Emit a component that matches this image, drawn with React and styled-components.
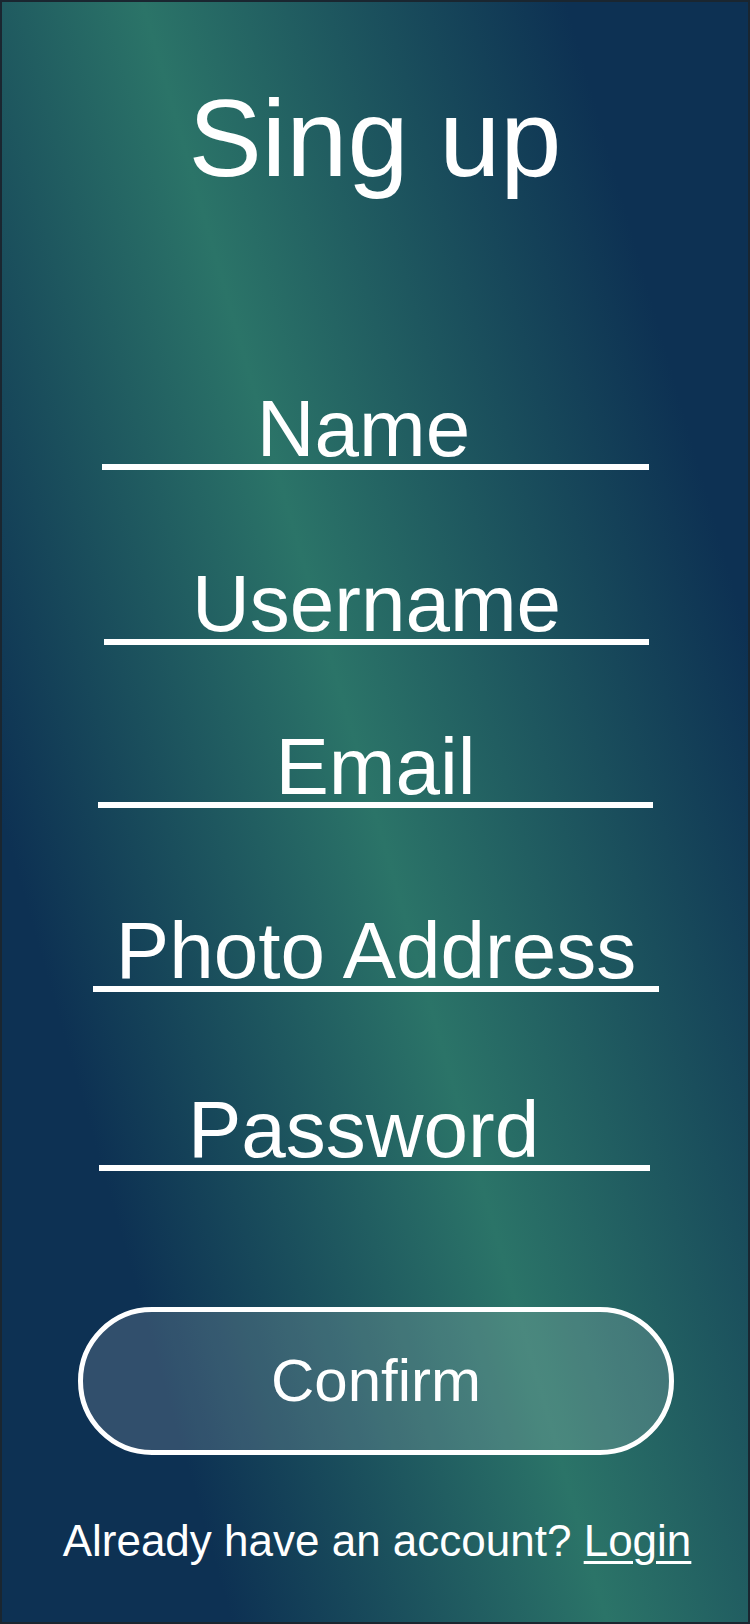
import React from "react"
import styled, { createGlobalStyle } from "styled-components"

const GlobalStyle = createGlobalStyle`
  html, body {
    margin: 0;
    padding: 0;
  }
  body {
    font-family: "Liberation Sans", Arial, sans-serif;
    background: #0d3153;
  }
`

const Screen = styled.main`
  box-sizing: border-box;
  width: 750px;
  min-height: 1624px;
  border: 2px solid #1a2630;
  background: linear-gradient(
    74deg,
    #0d3153 0%,
    #0d3153 19%,
    #2b7468 50%,
    #0d3153 85%,
    #0d3153 100%
  );
  color: #fff;
  display: flex;
  flex-direction: column;
  align-items: center;
  padding-top: 81px;
`

const Title = styled.h1`
  margin: 0;
  font-size: 110px;
  font-weight: 400;
  line-height: 110px;
  text-align: center;
`

const Form = styled.form`
  width: 100%;
  display: flex;
  flex-direction: column;
  margin-top: 201px;
`

const Field = styled.label`
  display: block;
  box-sizing: border-box;
  margin: ${p => p.$gap}px 0 0 ${p => p.$left}px;
  width: ${p => p.$width}px;
  border-bottom: 6px solid #fff;
  padding-right: ${p => p.$shift || 0}px;
  font-size: 80px;
  line-height: 70px;
  text-align: center;
  white-space: nowrap;
`

const Button = styled.button`
  box-sizing: border-box;
  align-self: center;
  width: 596px;
  height: 148px;
  margin-top: 136px;
  margin-left: 2px;
  border: 5px solid #fff;
  border-radius: 74px;
  background: rgba(255, 255, 255, 0.15);
  color: #fff;
  font-family: inherit;
  font-size: 60px;
  line-height: 1;
  cursor: pointer;
`

const Footer = styled.p`
  margin: 64px 0 0 4px;
  font-size: 44px;
  line-height: 44px;
  text-align: center;
`

const LoginLink = styled.a`
  color: #fff;
  text-decoration: underline;
  text-decoration-thickness: 3px;
  text-underline-offset: 5px;
`

const fields = [
  { label: "Name", gap: 0, left: 100, width: 547, shift: 24 },
  { label: "Username", gap: 99, left: 102, width: 545 },
  { label: "Email", gap: 87, left: 96, width: 555 },
  { label: "Photo Address", gap: 108, left: 91, width: 566 },
  { label: "Password", gap: 103, left: 97, width: 551, shift: 22 },
]

const App = () => (
  <>
    <GlobalStyle />
    <Screen>
      <Title>Sing up</Title>
      <Form onSubmit={e => e.preventDefault()}>
        {fields.map(f => (
          <Field
            key={f.label}
            $gap={f.gap}
            $left={f.left}
            $width={f.width}
            $shift={f.shift}
          >
            {f.label}
          </Field>
        ))}
        <Button type="submit">Confirm</Button>
      </Form>
      <Footer>
        Already have an account? <LoginLink href="#">Login</LoginLink>
      </Footer>
    </Screen>
  </>
)

export default App
